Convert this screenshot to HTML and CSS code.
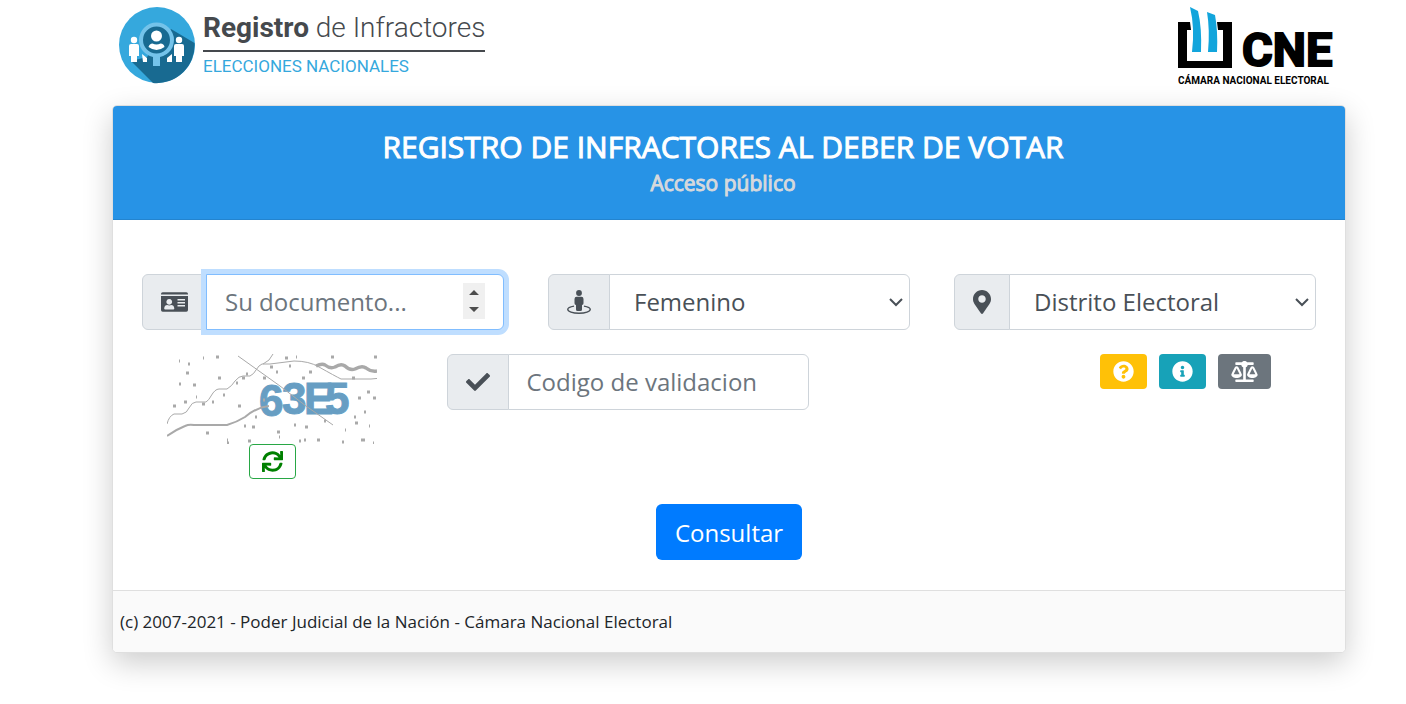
FILE: index.html
```html
<!DOCTYPE html>
<html lang="es">
<head>
  <meta charset="UTF-8">
  <meta name="viewport" content="width=device-width, initial-scale=1.0">
  <title>Registro de Infractores al deber de votar</title>
  <link rel="stylesheet" href="styles.css">
</head>
<body>
  <header class="top">
    <div class="logo">
      <svg class="logo-icon" viewBox="0 0 76 76" aria-hidden="true">
        <circle cx="38" cy="38" r="38" fill="#35a8dd"/>
        <path d="M52 22 L75.500 36 A38 38 0 0 1 34 76 L12 54 L28 50 Z" fill="#186a91"/>
        <g fill="#fff">
          <circle cx="15" cy="33" r="3.200"/>
          <path d="M10 39q0-2 2-2h6q2 0 2 2v10h-2v6h-6v-6h-2z"/>
          <circle cx="60" cy="33" r="3.200"/>
          <path d="M55 39q0-2 2-2h6q2 0 2 2v10h-2v6h-6v-6h-2z"/>
          <path d="M23 47l5 4v4h-4z"/>
          <path d="M53 47l-5 4v4h5z"/>
        </g>
        <rect x="34" y="50" width="7" height="9" fill="#74c3ea"/>
        <circle cx="37.500" cy="33" r="15.500" fill="#186a91" stroke="#74c3ea" stroke-width="4"/>
        <circle cx="37.500" cy="29" r="5.500" fill="#fff"/>
        <path d="M29.500 40q1-3.500 4-3.500 4 2 8 0 3.500 0 4 3.500-8 6-16 0z" fill="#fff"/>
      </svg>
      <div class="logo-text">
        <div class="logo-name"><b>Registro</b> de Infractores</div>
        <div class="logo-sub">ELECCIONES NACIONALES</div>
      </div>
    </div>
    <svg class="cne" viewBox="0 0 160 80" role="img" aria-label="CNE">
      <path d="M0 16h12l1 8H9v31h36V24h-5l-1-8h15v46H0z"/>
      <path d="M12 1l8 4q4 17 3 41h-9q3-24-2-45z" fill="#12a5dc"/>
      <path d="M29 6l8 3q3 16 2 37h-9q2-22-1-40z" fill="#12a5dc"/>
      <text class="cne-big" x="64" y="60">CNE</text>
      <text class="cne-small" x="0" y="78">CÁMARA NACIONAL ELECTORAL</text>
    </svg>
  </header>

  <main class="card">
    <div class="card-header">
      <h1>REGISTRO DE INFRACTORES AL DEBER DE VOTAR</h1>
      <h2>Acceso público</h2>
    </div>

    <form class="card-body">
      <div class="row">
        <div class="col">
          <div class="input-group">
            <label class="addon" for="documento" aria-label="Documento">
              <svg class="icon wide" viewBox="0 0 576 512">
                <path d="M0 84q0-36 36-36h504q36 0 36 36v12H0z"/>
                <path fill-rule="evenodd" d="M0 128h576v300q0 36-36 36H36q-36 0-36-36zM176 192a62 62 0 1 0 .1 0zM68 394q0 22 22 22h172q22 0 22-22c0-50-34-74-64-74-26 14-62 14-88 0-30 0-64 24-64 74zM352 192v32h160v-32zm0 64v32h160v-32zm0 64v32h160v-32z"/>
              </svg>
            </label>
            <input type="number" id="documento" class="control" placeholder="Su documento..." autofocus>
          </div>
        </div>
        <div class="col">
          <div class="input-group">
            <label class="addon" for="sexo" aria-label="Sexo">
              <svg class="icon" viewBox="0 0 512 512">
                <circle cx="256" cy="64" r="62"/>
                <path d="M160 190q0-46 46-46h100q46 0 46 46v90q0 28-32 40v96q0 32-32 32h-64q-32 0-32-32v-96q-32-12-32-40z"/>
                <path d="M150 345C60 362 16 382 16 412c0 48 104 84 240 84s240-36 240-84c0-30-44-50-134-67" fill="none" stroke="currentColor" stroke-width="30"/>
              </svg>
            </label>
            <select id="sexo" class="control">
              <option>Femenino</option>
              <option>Masculino</option>
            </select>
          </div>
        </div>
        <div class="col">
          <div class="input-group">
            <label class="addon" for="distrito" aria-label="Distrito">
              <svg class="icon narrow" viewBox="0 0 384 512">
                <path d="M172.268 501.670C26.970 291.031 0 269.413 0 192 0 85.961 85.961 0 192 0s192 85.961 192 192c0 77.413-26.970 99.031-172.268 309.670-9.535 13.774-29.930 13.773-39.464 0zM192 272c44.183 0 80-35.817 80-80s-35.817-80-80-80-80 35.817-80 80 35.817 80 80 80z"/>
              </svg>
            </label>
            <select id="distrito" class="control">
              <option>Distrito Electoral</option>
            </select>
          </div>
        </div>
      </div>

      <div class="row row-captcha">
        <div class="col captcha">
          <svg class="captcha-img" viewBox="0 0 210 90" role="img" aria-label="63E5">
            <g class="captcha-code">
              <text x="92" y="62">6</text>
              <text x="115" y="60">3</text>
              <text x="137" y="60">E</text>
              <text x="158" y="60">5</text>
            </g>
            <g fill="none" stroke="#a9a9a9">
              <path d="M0 70q2-8 7-10h8q5-1 7-6 3-6 7-6h10q3-2 5-6 4-7 8-7h8q5-3 8-8 4-5 8-5h7q4-2 6-6 3-5 6-6h8l24-3q15 0 25 6 16 9 22 12h30l22-2 14 1"/>
              <path d="M71 2l14 10 28 20 26 20 27 19M96 10l6-4 4-6"/>
              <path d="M0 82q8-6 18-10 4-2 9-1h33q10-3 18-8 12-10 24-11" stroke-width="2"/>
              <path d="M149 12q6-3 9-1 5 4 10 2 6-4 10-1 5 5 10 3 7-4 11-1 5 4 11 3" stroke-width="3.500"/>
            </g>
            <path class="captcha-dots" d="M12 7h1M21 10h2M36 4h1M49 3h3M19 19h3M12 30h2M26 31h3M29 43h1M51 24h3M35 50h3M6 52h3M17 48h3M45 48h2M56 41h2M69 29h2M75 24h3M79 20h2M71 52h3M88 63h2M96 46h2M85 73h3M77 72h2M81 87h3M39 79h3M60 89h2M60 86h1M96 24h3M103 13h3M109 18h2M122 12h2M118 4h3M129 3h1M135 24h3M142 18h3M110 78h3M112 83h1M127 71h2M138 73h3M132 87h2M137 86h2M157 67h2M164 3h3M185 24h3M191 44h3M200 38h3M206 44h3M197 58h2M188 69h3M187 63h2M202 72h1M178 76h1M194 86h4M207 3h3M206 89h1M175 88h2M150 86h3"/>
          </svg>
          <button type="button" class="btn btn-refresh" aria-label="Refrescar">
            <svg class="icon-sm" viewBox="0 0 512 512">
              <path d="M440.650 12.570l4 82.770A247.160 247.160 0 0 0 255.830 8C134.730 8 33.910 94.920 12.290 209.820A12 12 0 0 0 24.090 224h49.050a12 12 0 0 0 11.670-9.260 175.910 175.910 0 0 1 317-56.940l-101.460-4.860a12 12 0 0 0-12.570 12v47.410a12 12 0 0 0 12 12H500a12 12 0 0 0 12-12V12a12 12 0 0 0-12-12h-47.370a12 12 0 0 0-11.980 12.570zM255.830 432a175.610 175.610 0 0 1-146-77.800l101.800 4.870a12 12 0 0 0 12.570-12v-47.400a12 12 0 0 0-12-12H12a12 12 0 0 0-12 12V500a12 12 0 0 0 12 12h47.350a12 12 0 0 0 12-12.600l-4.150-82.570A247.170 247.170 0 0 0 255.830 504c121.110 0 221.930-86.920 243.550-201.820a12 12 0 0 0-11.800-14.180h-49.050a12 12 0 0 0-11.670 9.260A175.860 175.860 0 0 1 255.830 432z"/>
            </svg>
          </button>
        </div>
        <div class="col">
          <div class="input-group">
            <label class="addon" for="codigo" aria-label="Codigo">
              <svg class="icon" viewBox="0 0 512 512">
                <path d="M173.898 439.404l-166.400-166.400c-9.997-9.997-9.997-26.206 0-36.204l36.203-36.204c9.997-9.998 26.207-9.998 36.204 0L192 312.690 432.095 72.596c9.997-9.997 26.207-9.997 36.204 0l36.203 36.204c9.997 9.997 9.997 26.206 0 36.204l-294.400 294.401c-9.998 9.997-26.207 9.997-36.204-.001z"/>
              </svg>
            </label>
            <input type="text" id="codigo" class="control" placeholder="Codigo de validacion">
          </div>
        </div>
        <div class="col tools">
          <button type="button" class="btn btn-warning" aria-label="Ayuda">
            <svg class="icon-sm" viewBox="0 0 512 512">
              <path d="M504 256c0 136.997-111.043 248-248 248S8 392.997 8 256C8 119.083 119.043 8 256 8s248 111.083 248 248zM262.655 90c-54.497 0-89.255 22.957-116.549 63.758-3.536 5.286-2.353 12.415 2.715 16.258l34.699 26.310c5.205 3.947 12.621 3.008 16.665-2.122 17.864-22.658 30.113-35.797 57.303-35.797 20.429 0 45.698 13.148 45.698 32.958 0 14.976-12.363 22.667-32.534 33.976C247.128 238.528 216 254.941 216 296v4c0 6.627 5.373 12 12 12h56c6.627 0 12-5.373 12-12v-1.333c0-28.462 83.186-29.647 83.186-106.667 0-58.002-60.165-102-116.531-102zM256 338c-25.365 0-46 20.635-46 46 0 25.364 20.635 46 46 46s46-20.636 46-46c0-25.365-20.635-46-46-46z"/>
            </svg>
          </button>
          <button type="button" class="btn btn-info" aria-label="Información">
            <svg class="icon-sm" viewBox="0 0 512 512">
              <path d="M256 8C119.043 8 8 119.083 8 256c0 136.997 111.043 248 248 248s248-111.003 248-248C504 119.083 392.957 8 256 8zm0 110c23.196 0 42 18.804 42 42s-18.804 42-42 42-42-18.804-42-42 18.804-42 42-42zm56 254c0 6.627-5.373 12-12 12h-88c-6.627 0-12-5.373-12-12v-24c0-6.627 5.373-12 12-12h12v-64h-12c-6.627 0-12-5.373-12-12v-24c0-6.627 5.373-12 12-12h64c6.627 0 12 5.373 12 12v100h12c6.627 0 12 5.373 12 12v24z"/>
            </svg>
          </button>
          <button type="button" class="btn btn-secondary" aria-label="Normativa">
            <svg class="icon-sm wide" viewBox="0 0 640 512">
              <path d="M256 336h-.020c0-16.180 1.340-8.730-85.050-181.510-17.650-35.290-68.190-35.360-85.870 0C-2.060 328.750.020 320.330.020 336H0c0 44.180 57.310 80 128 80s128-35.820 128-80zM128 176l72 144H56l72-144zm511.980 160c0-16.180 1.340-8.730-85.050-181.510-17.650-35.290-68.190-35.360-85.870 0-87.120 174.260-85.040 165.840-85.040 181.510H384c0 44.180 57.310 80 128 80s128-35.820 128-80h-.020zM440 320l72-144 72 144H440zm88 128H352V153.250c23.510-10.290 41.160-31.480 46.390-57.250H528c8.840 0 16-7.160 16-16V48c0-8.840-7.160-16-16-16H383.640C369.040 12.680 346.090 0 320 0s-49.040 12.680-63.640 32H112c-8.840 0-16 7.160-16 16v32c0 8.840 7.160 16 16 16h129.610c5.230 25.760 22.870 46.960 46.390 57.250V448H112c-8.840 0-16 7.160-16 16v32c0 8.840 7.160 16 16 16h416c8.840 0 16-7.160 16-16v-32c0-8.840-7.160-16-16-16z"/>
            </svg>
          </button>
        </div>
      </div>

      <div class="submit">
        <button type="submit" class="btn-primary">Consultar</button>
      </div>
    </form>

    <footer class="card-footer">(c) 2007-2021 - Poder Judicial de la Nación - Cámara Nacional Electoral</footer>
  </main>
</body>
</html>
```
FILE: styles.css
```css
* {
  box-sizing: border-box;
}
body {
  margin: 0;
  padding: 0 60px 50px 112px;
  font-family: "Open Sans", sans-serif;
  font-size: 17px;
  color: #212529;
  background: #fff;
}

/* logos */
.top {
  display: flex;
  justify-content: space-between;
  align-items: flex-start;
  padding: 6px 8px 19px 7px;
}
.logo {
  display: flex;
  gap: 8px;
}
.logo-icon {
  width: 76px;
  height: 78px;
}
.logo-name {
  font-family: "Roboto", sans-serif;
  font-size: 28px;
  font-weight: 300;
  line-height: 44px;
  color: #45494d;
  border-bottom: 2px solid #45494d;
}
.logo-name b {
  font-weight: bold;
}
.logo-sub {
  font-family: "Roboto", sans-serif;
  font-size: 17px;
  line-height: 28px;
  color: #35a8dd;
}
.cne {
  width: 160px;
  height: 80px;
}
.cne-big,
.cne-small {
  font-family: "Roboto", sans-serif;
  font-weight: bold;
}
.cne-big {
  font-size: 47px;
  stroke: #000;
  stroke-width: 2px;
}
.cne-small {
  font-size: 10px;
}

/* card */
.card {
  border: 1px solid #dfdfdf;
  border-radius: 5px;
  box-shadow: 0 10px 30px rgba(0, 0, 0, 0.2);
  background: #fff;
}
.card-header {
  padding: 21px 12px 20px 0;
  background: #2793e6;
  border-bottom: 1px solid #2384cf;
  border-radius: 4px 4px 0 0;
  text-align: center;
}
.card-header h1,
.card-header h2 {
  margin: 0;
  font-weight: normal;
}
.card-header h1 {
  font-size: 30px;
  line-height: 40px;
  color: #fff;
  -webkit-text-stroke: 1px #fff;
}
.card-header h2 {
  font-size: 21px;
  line-height: 32px;
  color: #d6d9dc;
  -webkit-text-stroke: 1px #d6d9dc;
}
.card-body {
  padding: 54px 7px 30px;
}
.row {
  display: grid;
  grid-template-columns: repeat(3, 1fr);
  margin-bottom: 24px;
}
.row-captcha {
  grid-template-columns: 3fr 4fr 2fr 3fr;
  margin-bottom: 25px;
}
.col {
  min-width: 0;
  padding: 0 22px;
}

/* inputs */
.input-group {
  display: flex;
}
.addon {
  display: flex;
  align-items: center;
  padding: 0 18px;
  color: #495057;
  background: #e9ecef;
  border: 1px solid #ced4da;
  border-radius: 6px 0 0 6px;
}
.control {
  flex: 1;
  min-width: 0;
  height: 56px;
  margin: 0 0 0 -1px;
  padding: 0 18px 2px;
  font-family: inherit;
  font-size: 24px;
  color: #495057;
  background: #fff;
  border: 1px solid #ced4da;
  border-radius: 0 6px 6px 0;
}
select.control {
  padding: 0 24px 2px;
  appearance: none;
  background: #fff url("data:image/svg+xml,%3Csvg xmlns='http://www.w3.org/2000/svg' width='14' height='9'%3E%3Cpath d='M1 1l6 6 6-6' fill='none' stroke='%23495057' stroke-width='2'/%3E%3C/svg%3E") no-repeat right 6px center;
}
.control::placeholder {
  color: #6c757d;
}
.control:focus {
  outline: none;
  border-color: #80bdff;
  box-shadow: 0 0 0 5px #bfdeff;
  caret-color: transparent;
  z-index: 1;
}
.control::-webkit-inner-spin-button {
  appearance: none;
  opacity: 1;
  width: 22px;
  height: 36px;
  background: #f0f0f0 url("data:image/svg+xml,%3Csvg xmlns='http://www.w3.org/2000/svg' width='10' height='22'%3E%3Cpath d='M0 5l5-5 5 5zM0 17l5 5 5-5z' fill='%234d4d4d'/%3E%3C/svg%3E") no-repeat center;
}

.icon,
.icon-sm {
  display: block;
  fill: currentColor;
}
.icon {
  width: 24px;
  height: 24px;
}
.icon.wide {
  width: 27px;
}
.icon.narrow {
  width: 18px;
}
.icon-sm {
  width: 21px;
  height: 21px;
}
.icon-sm.wide {
  width: 27px;
}

/* captcha */
.captcha {
  display: flex;
  flex-direction: column;
  align-items: center;
}
.captcha-img {
  width: 210px;
  height: 90px;
}
.captcha-code {
  font-family: "Liberation Sans", sans-serif;
  font-size: 44px;
  font-weight: bold;
  fill: #4287b5;
  stroke: #4287b5;
  stroke-width: 1px;
  opacity: 0.8;
}
.captcha-dots {
  fill: none;
  stroke: #a9a9a9;
  stroke-width: 3px;
}

/* buttons */
.btn {
  height: 35px;
  padding: 0 12px;
  color: #fff;
  border: 1px solid transparent;
  border-radius: 4px;
  cursor: pointer;
}
.btn-refresh {
  color: green;
  background: #fff;
  border-color: #28a745;
}
.btn-warning {
  background: #ffc107;
}
.btn-info {
  background: #17a2b8;
}
.btn-secondary {
  background: #6c757d;
}
.tools {
  grid-column: 4;
  display: flex;
  justify-content: center;
  gap: 12px;
}
.submit {
  text-align: center;
}
.btn-primary {
  display: inline-block;
  height: 56px;
  padding: 0 19px;
  font-family: inherit;
  font-size: 24px;
  color: #fff;
  background: #007bff;
  border: 0;
  border-radius: 6px;
  cursor: pointer;
}
.card-footer {
  padding: 18px 7px;
  line-height: 25px;
  background: #fafafa;
  border-top: 1px solid #dfdfdf;
  border-radius: 0 0 4px 4px;
}
```
